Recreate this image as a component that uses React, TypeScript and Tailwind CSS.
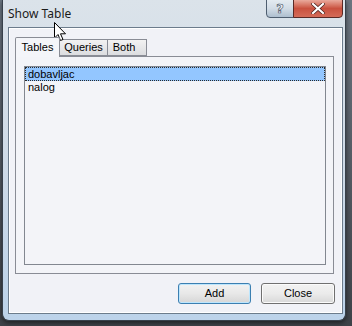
import React from "react";

export default function App() {
  const ui = { fontFamily: '"Liberation Sans", Arial, sans-serif' };
  return (
    <div className="relative w-[352px] h-[326px] overflow-hidden bg-gradient-to-b from-[#6b7580] to-[#3e4248]">
      {/* window */}
      <div className="ml-[2px] w-[344px] h-[321px] rounded-b-[7px] border border-t-0 border-[#38414b] bg-gradient-to-b from-[#dbe3ea] via-[#cfdbe7] to-[#bcd3ea] flex flex-col shadow-[0_2px_4px_rgba(0,0,0,0.5)]">
        <div className="h-[27px] pl-[5px] pt-[6px] text-[12px] leading-[16px] text-[#1b1b1b]" style={{ fontFamily: '"Noto Sans", "Open Sans", sans-serif' }}>
          Show Table
        </div>
        <div className="ml-[5px] w-[335px] h-[287px] border border-[#6c7c8c] bg-[#f1f2f7] shadow-[inset_0_0_0_1px_#ffffff] flex flex-col" style={ui}>
          {/* tabs */}
          <div className="ml-[6px] mt-[8px] w-[319px] flex flex-col">
            <div className="h-[20px] flex items-end text-[11px] text-black">
              <div className="relative z-10 h-[20px] w-[45px] border border-b-0 border-[#898c95] bg-[#f4f5f9] rounded-t-[2px] flex items-center justify-center -mb-[1px] pb-[1px]">
                Tables
              </div>
              <div className="h-[17px] w-[48px] border border-l-0 border-[#898c95] bg-gradient-to-b from-[#f2f2f2] to-[#dcdde0] flex items-center justify-center">
                Queries
              </div>
              <div className="h-[17px] w-[39px] border border-l-0 border-[#898c95] bg-gradient-to-b from-[#f2f2f2] to-[#dcdde0] flex items-center justify-center pr-[6px]">
                Both
              </div>
            </div>
            <div className="h-[218px] border border-[#898c95] bg-[#f3f4f8] pl-[8px] pt-[9px]">
              <div className="w-[302px] h-[199px] border border-[#828790] bg-[#f3f4f8] p-[0px] text-[11px] leading-[13px] text-black">
                <div className="h-[14px] bg-[#93c6ff] border border-dotted border-[#2a2a2a] pl-[2px] leading-[12px]">
                  dobavljac
                </div>
                <div className="h-[13px] pl-[3px] leading-[13px]">nalog</div>
              </div>
            </div>
          </div>
          {/* buttons */}
          <div className="mt-[9px] flex justify-end gap-[10px] pr-[7px] text-[11px] text-black">
            <div className="w-[73px] h-[21px] rounded-[3px] border border-[#3c7fb1] bg-gradient-to-b from-[#f2f2f2] via-[#e8e8e8] to-[#d6d6d6] shadow-[inset_0_0_0_1px_#bde6fd] flex items-center justify-center">
              Add
            </div>
            <div className="w-[74px] h-[21px] rounded-[3px] border border-[#707070] bg-gradient-to-b from-[#f2f2f2] via-[#ebebeb] to-[#d8d8d8] shadow-[inset_0_0_0_1px_#fbfbfb] flex items-center justify-center">
              Close
            </div>
          </div>
        </div>
      </div>

      {/* caption buttons */}
      <div className="absolute left-[266px] top-[-1px] w-[28px] h-[19px] rounded-bl-[4px] border border-[#4e5e70] bg-gradient-to-b from-[#e4ebf1] via-[#d2dce6] to-[#aebfcf] flex items-center justify-center">
        <span className="text-[13px] font-bold text-[#f5f7fa] leading-none" style={{ fontFamily: '"DejaVu Sans", sans-serif', WebkitTextStroke: "0.6px #3a4a5a" }}>?</span>
      </div>
      <div className="absolute left-[293px] top-[-1px] w-[50px] h-[19px] rounded-br-[4px] border border-[#5a2a26] bg-gradient-to-b from-[#e9a99c] via-[#c9513f] to-[#d46b58] flex items-center justify-center">
        <svg width="14" height="11" viewBox="0 0 14 11">
          <path d="M2 1 L12 10 M12 1 L2 10" stroke="#4a1f1a" strokeWidth="3.6" strokeLinecap="square" />
          <path d="M2 1 L12 10 M12 1 L2 10" stroke="#ffffff" strokeWidth="2.2" strokeLinecap="square" />
        </svg>
      </div>

      {/* mouse cursor */}
      <svg className="absolute left-[54px] top-[22px]" width="13" height="20" viewBox="0 0 13 20">
        <path d="M0.5 0.5 L0.5 16 L4 12.5 L6.5 18.5 L9 17.5 L6.5 11.8 L11.5 11.8 Z" fill="#ffffff" stroke="#000000" strokeWidth="1" strokeLinejoin="round" />
      </svg>
    </div>
  );
}
